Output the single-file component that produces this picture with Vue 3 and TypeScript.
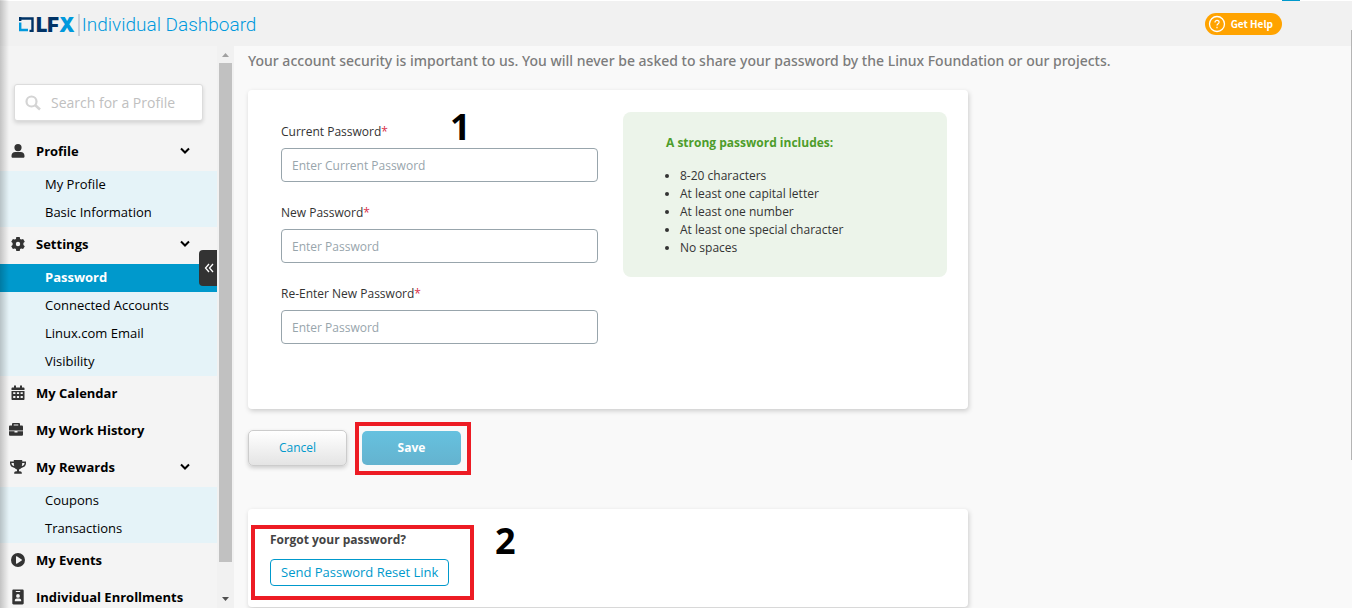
<script setup lang="ts">
import { ref } from 'vue'

interface MenuGroup {
  label: string
  icon: string
  children?: string[]
}

const groups: MenuGroup[] = [
  { label: 'Profile', icon: 'user', children: ['My Profile', 'Basic Information'] },
  { label: 'Settings', icon: 'gear', children: ['Password', 'Connected Accounts', 'Linux.com Email', 'Visibility'] },
  { label: 'My Calendar', icon: 'calendar' },
  { label: 'My Work History', icon: 'briefcase' },
  { label: 'My Rewards', icon: 'trophy', children: ['Coupons', 'Transactions'] },
  { label: 'My Events', icon: 'play' },
  { label: 'Individual Enrollments', icon: 'badge' },
]

const icons: Record<string, string> = {
  user: 'M8 1a3.6 3.6 0 1 1 0 7.2A3.6 3.6 0 0 1 8 1zM5.4 9h5.2c2.4 0 3.9 1.6 3.9 3.8v.7c0 .8-.6 1.3-1.3 1.3H2.8c-.7 0-1.3-.5-1.3-1.3v-.7C1.500 10.600 3 9 5.400 9z',
  gear: 'M6.300 1h3.400l.4 1.900 1.100.6 1.900-.6 1.700 2.900-1.400 1.300v1.800l1.400 1.300-1.700 2.900-1.900-.6-1.100.6-.4 1.900H6.300l-.4-1.900-1.100-.6-1.900.6-1.700-2.900 1.400-1.300V7.100L1.200 5.800l1.700-2.900 1.900.6 1.100-.6zM8 5.800a2.200 2.200 0 1 0 0 4.400 2.200 2.200 0 0 0 0-4.400z',
  calendar: 'M4 .5h2v2h4v-2h2v2h1.500c.6 0 1 .4 1 1V5h-13V3.500c0-.6.4-1 1-1H4zM1.500 6h13v8c0 .6-.4 1-1 1h-11c-.6 0-1-.4-1-1zM3.200 7.300v1.800h2.200V7.300zM6.900 7.300v1.800h2.200V7.300zM10.600 7.300v1.800h2.200V7.300zM3.200 11v2h2.200v-2zM6.900 11v2h2.200v-2zM10.600 11v2h2.200v-2z',
  briefcase: 'M4 3.500V2.200C4 1.500 4.500 1 5.200 1h5.600c.7 0 1.200.5 1.200 1.200v1.300h1.700c.8 0 1.300.5 1.300 1.300V8.500H1V4.800c0-.8.5-1.300 1.300-1.300zM5.700 2.600v.9h4.600v-.9zM1 9.300h5.500v1.200h3V9.300H15v3.200c0 .8-.5 1.300-1.300 1.300H2.300c-.8 0-1.300-.5-1.300-1.300z',
  trophy: 'M3.800 1h8.400v1.500H16v2c0 2.300-2 4-4.700 4.400-.7.9-1.500 1.400-2.300 1.600v1.800h1c1 0 1.800.7 1.800 1.700v.8H4.200V14c0-1 .8-1.700 1.800-1.700h1v-1.800c-.8-.2-1.600-.7-2.300-1.600C2 8.500 0 6.800 0 4.500v-2h3.800zM1.500 4v.5c0 1.100 1 2.100 2.700 2.600C3.900 6.100 3.800 5 3.800 4zM14.500 4h-2.300c0 1-.1 2.100-.4 3.100 1.700-.5 2.700-1.500 2.700-2.600z',
  play: 'M8 1a7 7 0 1 1 0 14A7 7 0 0 1 8 1zM6 4.700v6.600c0 .4.400.6.800.4l4.900-3.200c.4-.2.4-.7 0-1L6.800 4.300C6.400 4.100 6 4.300 6 4.700z',
  badge: 'M3.500.5h9c.7 0 1.200.5 1.200 1.200v12.600c0 .7-.5 1.200-1.200 1.200h-9c-.7 0-1.200-.5-1.200-1.200V1.700c0-.7.500-1.200 1.200-1.200zM5.800 1.900v1.100h4.400V1.900zM8 5a1.900 1.900 0 1 0 0 3.800A1.900 1.900 0 0 0 8 5zM4.800 12.300h6.400v-.8c0-1.200-.9-2-2-2H6.800c-1.100 0-2 .8-2 2z',
}

const fields = [
  { id: 'current', label: 'Current Password', placeholder: 'Enter Current Password', value: ref('') },
  { id: 'new', label: 'New Password', placeholder: 'Enter Password', value: ref('') },
  { id: 'repeat', label: 'Re-Enter New Password', placeholder: 'Enter Password', value: ref('') },
]

const rules = ['8-20 characters', 'At least one capital letter', 'At least one number', 'At least one special character', 'No spaces']
const active = ref('Password')
</script>

<template>
  <div class="page">
    <header class="topbar">
      <a class="logo" href="#">
        <svg class="mark" width="15" height="15" viewBox="0 0 15 15" aria-hidden="true">
          <path d="M0 1.500H13.500V14H10.500M1.200 0V4" fill="none" stroke="#003366" stroke-width="2.400" />
          <path d="M1.200 5.500V13H9" fill="none" stroke="#0099dd" stroke-width="2.400" />
        </svg>
        <span class="lfx">LF<span class="x">X</span></span>
        <span class="product">Individual Dashboard</span>
      </a>
      <button class="help" type="button">
        <svg width="18" height="18" viewBox="0 0 18 18" aria-hidden="true">
          <circle cx="9" cy="9" r="7.500" fill="none" stroke="#fff" stroke-width="1.300" />
          <path d="M7 7.400c0-2.800 4.100-2.400 4.100-.2 0 1.500-2.100 1.500-2.100 3.200M9 11.800v1.400" fill="none" stroke="#fff" stroke-width="1.200" />
        </svg>
        Get Help
      </button>
    </header>

    <div class="body">
      <aside class="sidebar">
        <label class="search">
          <svg width="16" height="16" viewBox="0 0 16 16" aria-hidden="true">
            <circle cx="6.500" cy="6.500" r="5" fill="none" stroke="#d4d4d4" stroke-width="2.200" />
            <path d="M10 10l5 4.500" stroke="#d4d4d4" stroke-width="2.600" />
          </svg>
          <input type="text" placeholder="Search for a Profile" aria-label="Search for a Profile" />
        </label>
        <nav>
          <template v-for="g in groups" :key="g.label">
            <button class="group" type="button">
              <svg class="icon" :class="g.icon" viewBox="0 0 16 16" aria-hidden="true">
                <path :d="icons[g.icon]" fill="#333" fill-rule="evenodd" />
              </svg>
              <span>{{ g.label }}</span>
              <svg v-if="g.children" class="chevron" width="10" height="8" viewBox="0 0 10 8" aria-hidden="true">
                <path d="M1 1.500l4 4 4-4" fill="none" stroke="#000" stroke-width="2" />
              </svg>
            </button>
            <ul v-if="g.children" class="children">
              <li v-for="c in g.children" :key="c">
                <a href="#" :class="{ active: c === active }" @click.prevent="active = c">{{ c }}</a>
              </li>
            </ul>
          </template>
        </nav>
        <button class="collapse" type="button" aria-label="Collapse menu">
          <svg width="10" height="10" viewBox="0 0 10 10" aria-hidden="true">
            <path d="M5 1L1.500 5 5 9M9 1L5.500 5 9 9" fill="none" stroke="#fff" stroke-width="1.300" />
          </svg>
        </button>
      </aside>

      <div class="scroll" aria-hidden="true">
        <svg width="7" height="4" viewBox="0 0 7 4"><path d="M0 4L3.500 0 7 4z" fill="#a0a0a0" /></svg>
        <div class="thumb"></div>
        <svg width="7" height="4" viewBox="0 0 7 4"><path d="M0 0L3.500 4 7 0z" fill="#505050" /></svg>
      </div>

      <main class="content">
        <p class="intro">Your account security is important to us. You will never be asked to share your password by the Linux Foundation or our projects.</p>
        <form @submit.prevent>
          <section class="card form-card">
            <div class="fields">
              <div v-for="f in fields" :key="f.id" class="field">
                <label :for="f.id">{{ f.label }}<span class="req">*</span></label>
                <input :id="f.id" v-model="f.value.value" type="password" :placeholder="f.placeholder" />
              </div>
            </div>
            <div class="tips">
              <h2>A strong password includes:</h2>
              <ul>
                <li v-for="r in rules" :key="r">{{ r }}</li>
              </ul>
            </div>
            <span class="step one">1</span>
          </section>
          <div class="actions">
            <button class="cancel" type="button">Cancel</button>
            <div class="save-wrap">
              <button class="save" type="submit">Save</button>
              <span class="outline around-save"></span>
            </div>
          </div>
        </form>
        <section class="card forgot">
          <h2>Forgot your password?</h2>
          <button class="reset" type="button">Send Password Reset Link</button>
          <span class="outline around-reset"></span>
          <span class="step two">2</span>
        </section>
      </main>
    </div>
    <div class="edge" aria-hidden="true"></div>
    <div class="page-scroll" aria-hidden="true"></div>
    <div class="tab-tip" aria-hidden="true"></div>
  </div>
</template>

<style>
body {
  margin: 0;
  background: #f9f9f9;
}
</style>

<style scoped>
* {
  box-sizing: border-box;
}
.page {
  position: relative;
  height: 100vh;
  overflow: hidden;
  display: flex;
  flex-direction: column;
  font-family: "Open Sans", sans-serif;
  font-size: 13px;
  color: #333;
}
button,
input {
  font-family: inherit;
  font-size: inherit;
}
button {
  cursor: pointer;
}
.topbar {
  flex: none;
  height: 46px;
  border-top: 1px solid #fff;
  background: #f1f1f1;
  display: flex;
  align-items: center;
  justify-content: space-between;
  padding: 0 70px 0 19px;
}
.logo {
  display: flex;
  align-items: center;
  padding-top: 2px;
  text-decoration: none;
}
.lfx {
  margin: 0 3px 0 2px;
  font: 900 20px/22px Inter, sans-serif;
  color: #003366;
}
.x {
  color: #0099dd;
}
.product {
  border-left: 2px solid #ccd0d8;
  padding-left: 2px;
  font: 300 19px/22px Roboto, sans-serif;
  color: #0099dd;
}
.help {
  height: 22px;
  border: 0;
  border-radius: 11px;
  padding: 0 9px 0 3px;
  display: flex;
  align-items: center;
  gap: 5px;
  background: #ffa300;
  color: #fff;
  font: 700 10px/22px "Noto Sans CJK SC", sans-serif;
}
.body {
  flex: 1;
  min-height: 0;
  display: flex;
}
.sidebar {
  position: relative;
  flex: none;
  width: 217px;
  padding-top: 38px;
  background: #f4f4f4;
}
.search {
  height: 37px;
  margin: 0 14px 13px;
  padding: 0 10px;
  display: flex;
  align-items: center;
  gap: 8px;
  background: #fff;
  border: 1px solid #dcdcdc;
  border-radius: 3px;
  box-shadow: 0 2px 4px rgba(0, 0, 0, 0.14);
}
.search svg {
  flex: none;
}
.search input {
  width: 100%;
  min-width: 0;
  border: 0;
  outline: 0;
  background: none;
  font-size: 14px;
}
.search input::placeholder {
  color: #c0c0c0;
}
.group {
  width: 100%;
  height: 37px;
  border: 0;
  padding: 0 27px 3px 10px;
  display: flex;
  align-items: center;
  background: none;
  color: #000;
  font-weight: 700;
}
.icon {
  flex: none;
  width: 16px;
  height: 16px;
  margin-right: 10px;
}
.icon.briefcase {
  margin: 0 12px 0 -2px;
}
.chevron {
  margin-left: auto;
}
.children {
  margin: 0;
  padding: 0;
  list-style: none;
  background: #e5f3f8;
}
.children a {
  display: block;
  padding: 0 0 2px 45px;
  line-height: 26px;
  color: #000;
  text-decoration: none;
}
.children a.active {
  background: #0099cc;
  color: #fff;
  font-weight: 700;
}
.collapse {
  position: absolute;
  right: 0;
  top: 204px;
  width: 18px;
  height: 36px;
  padding: 0 0 0 1px;
  border: 0;
  border-radius: 4px 0 0 4px;
  background: #333;
  display: flex;
  align-items: center;
  justify-content: center;
}
.scroll {
  flex: none;
  width: 17px;
  padding: 7px 2px;
  display: flex;
  flex-direction: column;
  align-items: center;
  background: #f1f1f1;
}
.thumb {
  width: 13px;
  height: 91%;
  margin-top: 6px;
  background: #c1c1c1;
}
.scroll svg {
  flex: none;
}
.scroll svg:last-child {
  margin-top: auto;
}
.content {
  flex: 1;
  min-width: 0;
  padding: 4px 14px 0;
}
.intro {
  margin: 0 0 18px;
  font: 500 14px/22px "Noto Sans", sans-serif;
  color: #7c7c7c;
}
.card {
  position: relative;
  max-width: 720px;
  background: #fff;
  border-radius: 4px;
  box-shadow: 1px 2px 5px rgba(0, 0, 0, 0.18);
}
.form-card {
  display: flex;
  align-items: flex-start;
  gap: 25px;
  padding: 22px 21px 65px 33px;
}
.fields {
  flex: 1;
  display: grid;
  gap: 21px;
  padding-top: 10px;
}
.field {
  display: grid;
  gap: 6px;
}
.field label {
  font-size: 12px;
  line-height: 20px;
  font-weight: 500;
}
.req {
  color: #d9304c;
}
.field input {
  width: 100%;
  height: 34px;
  padding: 0 10px;
  border: 1px solid #98a5ac;
  border-radius: 4px;
  background: #fff;
  font-size: 12px;
}
.field input::placeholder {
  color: #98a5ac;
}
.tips {
  width: 324px;
  height: 165px;
  padding: 22px 43px;
  border-radius: 8px;
  background: #ecf4ea;
}
.tips h2 {
  margin: 0 0 15px;
  font-size: 12px;
  line-height: 18px;
  color: #4d9d2b;
}
.tips ul {
  margin: 0;
  padding-left: 14px;
  font-size: 12px;
  line-height: 18px;
}
.actions {
  display: flex;
  gap: 15px;
  margin: 21px 0 43px;
}
.cancel,
.save {
  width: 99px;
  height: 36px;
  padding: 0 0 1px;
  border-radius: 5px;
  font-size: 12px;
  font-weight: 500;
}
.cancel {
  border: 1px solid #ccc;
  background: linear-gradient(#fff, #e4e4e4);
  box-shadow: 0 2px 4px rgba(0, 0, 0, 0.18);
  color: #0099cc;
}
.save-wrap {
  position: relative;
}
.save {
  height: 34px;
  margin-top: 1px;
  border: 0;
  background: linear-gradient(#66c1df, #64b3cf);
  color: #fff;
  font-weight: 700;
}
.outline {
  position: absolute;
  border: 4px solid #ed1c24;
  pointer-events: none;
}
.around-save {
  inset: -8px -10px -9px -7px;
}
.around-reset {
  left: 3px;
  top: 16px;
  width: 223px;
  height: 75px;
}
.step {
  position: absolute;
  font: 700 36px/36px "Noto Sans", sans-serif;
  color: #000;
}
.one {
  left: 202px;
  top: 19px;
}
.two {
  left: 247px;
  top: 14px;
}
.forgot {
  padding: 21px 22px;
}
.forgot h2 {
  margin: 0 0 9px;
  font-size: 12px;
  line-height: 20px;
  color: #444;
}
.reset {
  display: block;
  height: 27px;
  padding: 0 10px 2px;
  border: 1px solid #0099cc;
  border-radius: 4px;
  background: #fff;
  color: #0099cc;
}
.edge {
  position: absolute;
  inset: 0 auto 0 0;
  width: 9px;
  background: linear-gradient(90deg, rgba(0, 0, 0, 0.2), transparent);
  pointer-events: none;
}
.page-scroll {
  position: absolute;
  right: 0;
  top: 30px;
  width: 1px;
  height: 430px;
  background: #b5b5b5;
}
.tab-tip {
  position: absolute;
  right: 52px;
  top: 0;
  width: 18px;
  height: 1px;
  background: #0099cc;
}
</style>
